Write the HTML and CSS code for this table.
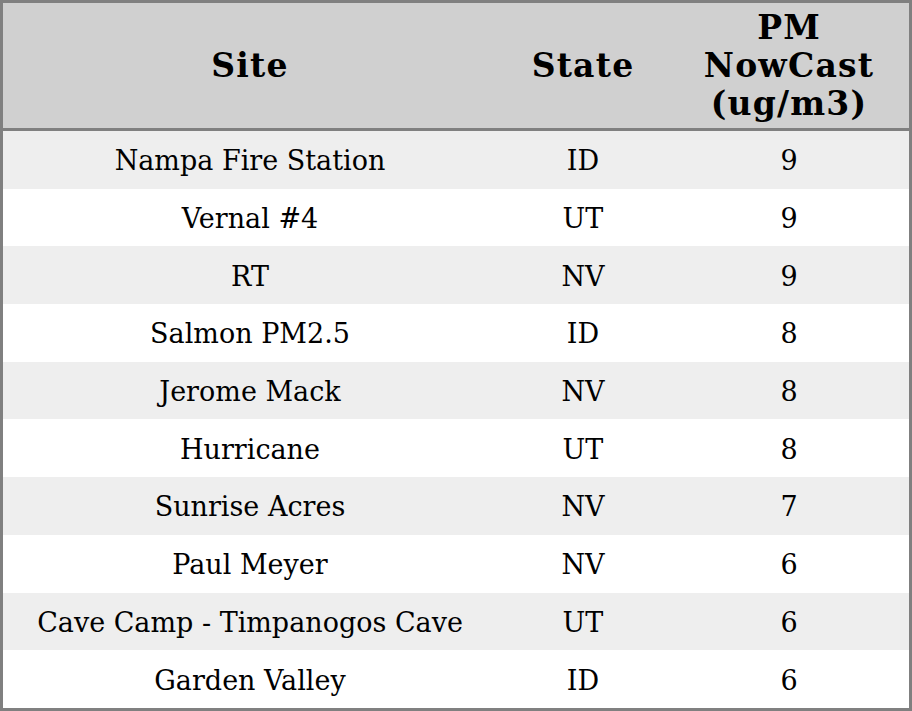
FILE: index.html
```html
<!DOCTYPE html>
<html>
<head>
<meta charset="utf-8">
<link rel="stylesheet" href="styles.css">
</head>
<body>
<table class="aq">
<thead>
<tr><th class="c-site">Site</th><th class="c-state">State</th><th class="c-pm">PM<br>NowCast<br>(ug/m3)</th></tr>
</thead>
<tbody>
<tr><td>Nampa Fire Station</td><td>ID</td><td>9</td></tr>
<tr><td>Vernal #4</td><td>UT</td><td>9</td></tr>
<tr><td>RT</td><td>NV</td><td>9</td></tr>
<tr><td>Salmon PM2.5</td><td>ID</td><td>8</td></tr>
<tr><td>Jerome Mack</td><td>NV</td><td>8</td></tr>
<tr><td>Hurricane</td><td>UT</td><td>8</td></tr>
<tr><td>Sunrise Acres</td><td>NV</td><td>7</td></tr>
<tr><td>Paul Meyer</td><td>NV</td><td>6</td></tr>
<tr><td>Cave Camp - Timpanogos Cave</td><td>UT</td><td>6</td></tr>
<tr><td>Garden Valley</td><td>ID</td><td>6</td></tr>
</tbody>
</table>
</body>
</html>
```
FILE: styles.css
```css
html, body { margin: 0; padding: 0; background: #fff; }
body { font-family: "DejaVu Serif", serif; color: #000; }
.aq {
  width: 912px;
  height: 711px;
  border-collapse: collapse;
  border: 3px solid #808080;
  table-layout: fixed;
}
.aq th {
  background: #d0d0d0;
  font-size: 33px;
  font-weight: bold;
  letter-spacing: 1.2px;
  line-height: 38px;
  height: 124px;
  padding: 1px 0 0;
  border-bottom: 3px solid #808080;
  text-align: center;
}
.c-site { width: 494px; }
.c-state { width: 172px; }
.c-pm { width: 240px; }
.aq td {
  font-size: 27px;
  text-align: center;
  padding: 2px 0 0;
  height: 55px;
}
.aq tbody tr:nth-child(odd) td { background: #eeeeee; }
```
